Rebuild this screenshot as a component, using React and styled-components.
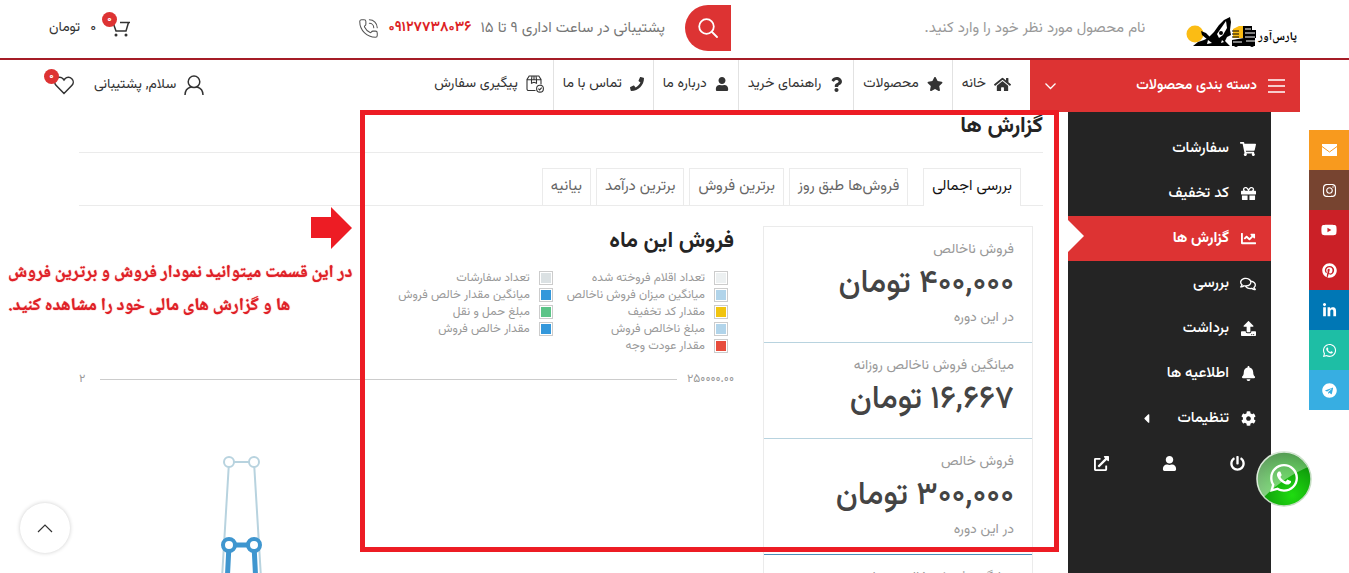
import React from 'react'
import styled, { createGlobalStyle } from 'styled-components'
import {
  FaHome, FaStar, FaQuestion, FaUser, FaPhone, FaShoppingCart, FaGift, FaChartLine, FaRegComments,
  FaUpload, FaBell, FaCog, FaPowerOff, FaExternalLinkAlt, FaCaretLeft, FaInstagram, FaYoutube,
  FaPinterest, FaLinkedinIn, FaWhatsapp, FaTelegram,
} from 'react-icons/fa'
import { PhoneCall } from 'lucide-react'

const GlobalStyle = createGlobalStyle`
  * {
    box-sizing: border-box;
  }
  body {
    margin: 0;
    background: #fff;
    color: #333;
    font-family: Vazirmatn, "Noto Sans Arabic", "DejaVu Sans", sans-serif;
    font-size: 14px;
  }
  a {
    color: inherit;
    text-decoration: none;
  }
  h1, h2, p, ul {
    margin: 0;
    padding: 0;
  }
  ul {
    list-style: none;
  }
  button {
    border: none;
    padding: 0;
    cursor: pointer;
    font-family: inherit;
  }
  svg {
    display: block;
    flex-shrink: 0;
  }
`

const Page = styled.div`
  height: 100vh;
  overflow: hidden;
  direction: rtl;
  display: flex;
  flex-direction: column;
`

// header

const TopBar = styled.header`
  display: flex;
  align-items: center;
  height: 60px;
  flex-shrink: 0;
  padding: 0 49px 2px;
  border-bottom: 2px solid #a51c26;
`
const Logo = styled.a`
  display: flex;
  align-items: flex-end;
  margin: 8px 3px 0 26px;
`
const LogoText = styled.span`
  font-family: "Noto Naskh Arabic", serif;
  font-size: 12px;
  font-weight: 700;
  line-height: 20px;
  color: #000;
  white-space: nowrap;
`
const Search = styled.form`
  display: flex;
  width: 38%;
  height: 46px;
`
const SearchInput = styled.input`
  flex: 1;
  min-width: 0;
  border: none;
  outline: none;
  padding: 0 15px;
  font-family: inherit;
  font-size: 15px;
  color: #333;
  &::placeholder {
    color: #999;
    opacity: 1;
  }
`
const SearchButton = styled.button`
  width: 46px;
  display: flex;
  align-items: center;
  justify-content: center;
  color: #fff;
  background-color: #dd3333;
  border-radius: 23px 0 0 23px;
`
const Support = styled.div`
  display: flex;
  align-items: center;
  gap: 9px;
  margin-right: 20px;
  font-size: 15px;
  color: #777;
  white-space: nowrap;
`
const SupportPhone = styled.a`
  color: #dd1f26;
  font-size: 14px;
  font-weight: 700;
`
const Cart = styled.a`
  display: flex;
  align-items: center;
  gap: 16px;
  margin-right: auto;
`
const Price = styled.span`
  display: flex;
  gap: 10px;
`
const IconWithBadge = styled.span`
  position: relative;
`
const Badge = styled.span`
  position: absolute;
  top: -7px;
  left: -10px;
  width: 15px;
  height: 15px;
  border-radius: 50%;
  background-color: #dd3333;
  color: #fff;
  font-size: 10px;
  font-weight: 700;
  line-height: 15px;
  text-align: center;
`

// navigation

const NavBar = styled.div`
  display: flex;
  height: 52px;
  flex-shrink: 0;
  padding: 0 49px;
`
const Categories = styled.button`
  width: 270px;
  display: flex;
  align-items: center;
  gap: 11px;
  padding: 0 15px;
  color: #fff;
  background-color: #dd3333;
  font-size: 14px;
  font-weight: 600;
`
const CategoriesArrow = styled.span`
  margin-right: auto;
`
const Menu = styled.nav`
  display: flex;
  padding-right: 10px;
`
const MenuLink = styled.a`
  display: flex;
  align-items: center;
  gap: 8px;
  padding: 0 9px 4px;
  white-space: nowrap;
  border-left: 1px solid #e2e2e2;
  &:last-child {
    border-left: none;
  }
`
const Account = styled.div`
  display: flex;
  align-items: center;
  gap: 20px;
  margin-right: auto;
  padding: 0 0 2px 5px;
  white-space: nowrap;
`
const AccountLink = styled.a`
  display: flex;
  align-items: center;
  gap: 8px;
`

// main area

const Main = styled.main`
  position: relative;
  display: flex;
  flex: 1;
  min-height: 0;
  padding: 0 78px 0 79px;
`
const Sidebar = styled.aside`
  width: 203px;
  flex-shrink: 0;
  padding-top: 14px;
  background-color: #242424;
  color: #fff;
`
const SideLink = styled.a`
  position: relative;
  display: flex;
  align-items: center;
  gap: 11px;
  height: 45px;
  padding: 0 15px;
  font-size: 15px;
  font-weight: ${props => (props.$active ? 700 : 500)};
  background-color: ${props => (props.$active ? '#dd3333' : 'transparent')};
  &::after {
    content: "";
    display: ${props => (props.$active ? 'block' : 'none')};
    position: absolute;
    left: 0;
    top: 4px;
    border: 16px solid transparent;
    border-left-color: #fff;
    border-right-width: 0;
  }
`
const SideIcon = styled.span`
  width: 16px;
  display: flex;
  justify-content: center;
`
const SideCaret = styled.span`
  margin-right: 12px;
`
const SideFooter = styled.div`
  display: flex;
  height: 45px;
`
const SideFooterLink = styled.a`
  flex: 1;
  display: flex;
  align-items: center;
  justify-content: center;
`
const Content = styled.section`
  flex: 1;
  min-width: 0;
  margin-right: 25px;
`
const PageTitle = styled.h1`
  font-size: 22px;
  line-height: 30px;
  font-weight: 700;
  color: #242424;
  padding-bottom: 10px;
  border-bottom: 1px solid #ebebeb;
`
const Tabs = styled.nav`
  display: flex;
  gap: 5px;
  margin-top: 15px;
  padding-right: 22px;
  border-bottom: 1px solid #ebebeb;
`
const Tab = styled.a`
  height: 37px;
  line-height: 35px;
  padding: 0 8px;
  border: 1px solid #ebebeb;
  border-bottom: none;
  font-size: 15px;
  color: ${props => (props.$active ? '#111' : '#666')};
  background-color: #fff;
  height: ${props => (props.$active ? '38px' : '37px')};
  margin-bottom: ${props => (props.$active ? '-1px' : 0)};
  margin-left: ${props => (props.$active ? '10px' : 0)};
  white-space: nowrap;
`
const Report = styled.div`
  display: flex;
  gap: 29px;
  padding: 20px 10px 0 0;
`
const Summary = styled.ul`
  width: 270px;
  flex-shrink: 0;
  border: 1px solid #ebebeb;
`
const SummaryItem = styled.li`
  min-height: 96px;
  padding: 12px 18px 13px;
  border-bottom: 1px solid ${props => props.$line};
`
const SummaryLabel = styled.p`
  font-size: 14px;
  line-height: 22px;
  color: #999;
`
const SummaryValue = styled.p`
  font-size: 32px;
  line-height: 46px;
  font-weight: 500;
  color: #444;
`
const Chart = styled.div`
  flex: 1;
  min-width: 0;
`
const ChartTitle = styled.h2`
  font-size: 22px;
  line-height: 32px;
  font-weight: 700;
  color: #242424;
`
const Legend = styled.ul`
  display: grid;
  grid-auto-flow: column;
  grid-template-rows: repeat(5, 14px);
  grid-auto-columns: 27%;
  row-gap: 3px;
  margin-top: 13px;
  padding-right: 6px;
`
const LegendItem = styled.li`
  display: flex;
  align-items: center;
  gap: 9px;
  font-size: 12px;
  line-height: 14px;
  color: #999;
  white-space: nowrap;
`
const Swatch = styled.span`
  width: 14px;
  height: 14px;
  flex-shrink: 0;
  border: 1px solid #ccc;
  padding: 1px;
  background-color: ${props => props.$color};
  background-clip: content-box;
`
const Axis = styled.div`
  display: flex;
  align-items: center;
  margin-top: 18px;
  font-size: 12px;
  line-height: 16px;
  color: #999;
`
const AxisLine = styled.span`
  flex: 1;
  height: 1px;
  margin: 0 10px 0 15px;
  background-color: #ccc;
`

// notes over the page

const Frame = styled.div`
  position: absolute;
  top: -2px;
  left: 360px;
  right: 290px;
  height: 442px;
  border: 5px solid #ed1c24;
  pointer-events: none;
`
const Note = styled.div`
  position: absolute;
  top: 95px;
  left: 8px;
`
const NoteArrow = styled.svg`
  margin-left: 303px;
`
const NoteText = styled.p`
  margin-top: 8px;
  font-family: "Noto Naskh Arabic", serif;
  font-size: 18px;
  line-height: 33px;
  font-weight: 700;
  color: #e01f27;
  text-shadow: 0 0 1px #e01f27;
  text-align: left;
  white-space: nowrap;
`
const Social = styled.div`
  position: fixed;
  top: 130px;
  right: 0;
`
const SocialLink = styled.a`
  width: 40px;
  height: 40px;
  display: flex;
  align-items: center;
  justify-content: center;
  color: #fff;
  background-color: ${props => props.$color};
`
const ChatButton = styled.a`
  position: fixed;
  right: 37px;
  bottom: 66px;
  width: 56px;
  height: 56px;
`
const ScrollTop = styled.button`
  position: fixed;
  left: 20px;
  bottom: 20px;
  width: 50px;
  height: 50px;
  display: flex;
  align-items: center;
  justify-content: center;
  border-radius: 50%;
  background-color: #fff;
  box-shadow: 0 0 4px rgba(0, 0, 0, 0.2);
`

const LogoArt = () => (
  <svg width="72" height="32" viewBox="0 0 72 32">
    <circle cx="9" cy="18" r="8.5" fill="#fbbc14" />
    <path d="M7 30 12 26 18 24 22 22 24 20 28 16 33 9 38 4 44 1 45 6 44 14 45 19 41 21 39 25 44 30Z" fill="#000" />
    <path d="M15 15 20 17 26 23 32 27 30 29 22 24 16 19Z" fill="#000" />
    <path d="M31 18 40 5 41 12 37 19 33 22Z" fill="#fff" />
    <circle cx="35" cy="17" r="2" fill="#000" />
    <path d="M22 24l4 3-5 1zM36 24l2 2-3 1z" fill="#fff" />
    <path d="M47 13 53 10 57 10 57 22 47 22Z" fill="#fbbc14" />
    <path d="M46 15H53M46 18H53M46 21H53" stroke="#000" strokeWidth="1" />
    <path d="M46 24 58 22V20H69V30H46Z" fill="#000" />
    <path d="M57 10H66V14H70V22H57Z" fill="#000" />
    <path d="M59 13H65M59 17H69M59 21H69M60 25H70M47 26H56" stroke="#fff" strokeWidth="1" />
    <circle cx="50" cy="29" r="2" fill="#000" />
    <circle cx="66" cy="29" r="2" fill="#000" />
  </svg>
)

const SearchIcon = () => (
  <svg width="20" height="20" viewBox="0 0 20 20" fill="none" stroke="currentColor" strokeWidth="1.8" strokeLinecap="round">
    <circle cx="8.5" cy="8.5" r="7.3" />
    <path d="M14 14l5 5" />
  </svg>
)

const CartIcon = () => (
  <svg width="18" height="18" viewBox="0 0 18 18" fill="none" stroke="#333" strokeWidth="1.5">
    <path d="M8 3.500H18M16.500 3.500L14 12H4L1.500 5" />
    <circle cx="4" cy="16" r="1.5" fill="#333" stroke="none" />
    <circle cx="14" cy="16" r="1.5" fill="#333" stroke="none" />
  </svg>
)

const HeartIcon = () => (
  <svg width="20" height="19" viewBox="0 0 20 19" fill="none" stroke="#333" strokeWidth="1.5">
    <path d="M10 17.500 2 9.300C0.300 7.500 0.400 4.500 2.200 2.700 4.200 0.800 7.200 0.900 9 2.800L10 4 11 2.800C12.800 0.900 15.800 0.800 17.800 2.700 19.600 4.500 19.700 7.500 18 9.300Z" />
  </svg>
)

const PersonIcon = () => (
  <svg width="20" height="20" viewBox="0 0 20 20" fill="none" stroke="#333" strokeWidth="1.5">
    <circle cx="10" cy="6.800" r="5.800" />
    <path d="M1 20C1 15.500 3.500 13 7 12M19 20C19 15.500 16.500 13 13 12" />
  </svg>
)

const ParcelIcon = () => (
  <svg width="18" height="18" viewBox="0 0 18 18" fill="none" stroke="#333" strokeWidth="1.1">
    <path d="M9.500 15.500H2.500A1.500 1.500 0 0 1 1 14V4.500L3.200 1H12.800L15 4.500V9.500M1 4.800H15M6 1L5.500 4.800V8.300L8 7.300 10.500 8.300V4.800L10 1M8 1V4.800" />
    <circle cx="14" cy="13.700" r="3.400" />
    <path d="M12.400 13.700L13.600 14.900 15.700 12.600" />
  </svg>
)

const MenuIcon = () => (
  <svg width="17" height="14" viewBox="0 0 17 14" stroke="#fff" strokeWidth="1.5">
    <path d="M0 1H17M0 7H17M0 13H17" />
  </svg>
)

const MailIcon = () => (
  <svg width="15" height="12" viewBox="0 0 15 12">
    <path d="M0 0H15V12H0Z" fill="#fff" />
    <path d="M0 2.500 7.500 8 15 2.500" fill="none" stroke="#f89a1e" strokeWidth="1" />
  </svg>
)

const ChatArt = () => (
  <svg width="56" height="56" viewBox="0 0 56 56">
    <defs>
      <radialGradient id="chatFill" cx="0.65" cy="0.8" r="0.8">
        <stop offset="0" stopColor="#1fdc10" />
        <stop offset="0.6" stopColor="#12a50c" />
        <stop offset="1" stopColor="#087006" />
      </radialGradient>
      <linearGradient id="chatGloss" x1="0" y1="1" x2="0.6" y2="0">
        <stop offset="0" stopColor="#fff" stopOpacity="0.5" />
        <stop offset="1" stopColor="#fff" stopOpacity="0.3" />
      </linearGradient>
    </defs>
    <circle cx="28" cy="28" r="27" fill="url(#chatFill)" stroke="#c4dcc2" strokeWidth="1.5" />
    <path d="M8 46A27 27 0 1 1 52 16C38 22 22 32 8 46Z" fill="url(#chatGloss)" />
    <FaWhatsapp x="12" y="11" size={32} color="#fff" />
  </svg>
)

const menu = [
  { text: 'خانه', icon: <FaHome size={17} /> },
  { text: 'محصولات', icon: <FaStar size={16} /> },
  { text: 'راهنمای خرید', icon: <FaQuestion size={15} /> },
  { text: 'درباره ما', icon: <FaUser size={14} /> },
  { text: 'تماس با ما', icon: <FaPhone size={14} /> },
  { text: 'پیگیری سفارش', icon: <ParcelIcon /> },
]

const sideLinks = [
  { text: 'سفارشات', icon: <FaShoppingCart size={16} /> },
  { text: 'کد تخفیف', icon: <FaGift size={15} /> },
  { text: 'گزارش ها', icon: <FaChartLine size={15} />, active: true },
  { text: 'بررسی', icon: <FaRegComments size={16} /> },
  { text: 'برداشت', icon: <FaUpload size={15} /> },
  { text: 'اطلاعیه ها', icon: <FaBell size={15} /> },
  { text: 'تنظیمات', icon: <FaCog size={15} />, sub: true },
]

const tabs = ['بررسی اجمالی', 'فروش‌ها طبق روز', 'برترین فروش', 'برترین درآمد', 'بیانیه']

const summary = [
  { label: 'فروش ناخالص', value: '۴۰۰,۰۰۰ تومان', note: 'در این دوره', line: '#b8d3df' },
  { label: 'میانگین فروش ناخالص روزانه', value: '۱۶,۶۶۷ تومان', line: '#b8d3df' },
  { label: 'فروش خالص', value: '۳۰۰,۰۰۰ تومان', note: 'در این دوره', line: '#4a8fb8' },
  { label: 'میانگین فروش خالص روزانه', value: '۱۲,۵۰۰ تومان', line: '#4a8fb8' },
]

const legend = [
  { text: 'تعداد اقلام فروخته شده', color: '#ecf0f1' },
  { text: 'میانگین میزان فروش ناخالص', color: '#b1d4ea' },
  { text: 'مقدار کد تخفیف', color: '#f1c40f' },
  { text: 'مبلغ ناخالص فروش', color: '#b1d4ea' },
  { text: 'مقدار عودت وجه', color: '#e74c3c' },
  { text: 'تعداد سفارشات', color: '#dbe1e3' },
  { text: 'میانگین مقدار خالص فروش', color: '#3498db' },
  { text: 'مبلغ حمل و نقل', color: '#5cc488' },
  { text: 'مقدار خالص فروش', color: '#3498db' },
]

const social = [
  { name: 'Email', color: '#f89a1e', icon: <MailIcon /> },
  { name: 'Instagram', color: '#774430', icon: <FaInstagram size={15} /> },
  { name: 'YouTube', color: '#cb2027', icon: <FaYoutube size={16} /> },
  { name: 'Pinterest', color: '#cb2027', icon: <FaPinterest size={15} /> },
  { name: 'LinkedIn', color: '#0077b5', icon: <FaLinkedinIn size={15} /> },
  { name: 'WhatsApp', color: '#1ebea5', icon: <FaWhatsapp size={15} /> },
  { name: 'Telegram', color: '#37aee2', icon: <FaTelegram size={15} /> },
]

const Header = () => (
  <>
    <TopBar>
      <Logo href="#">
        <LogoText>پارس‌آور</LogoText>
        <LogoArt />
      </Logo>
      <Search onSubmit={e => e.preventDefault()}>
        <SearchInput type="text" aria-label="جستجو" placeholder="نام محصول مورد نظر خود را وارد کنید." />
        <SearchButton type="submit" aria-label="جستجو"><SearchIcon /></SearchButton>
      </Search>
      <Support>
        <span>پشتیبانی در ساعت اداری ۹ تا ۱۵</span>
        <SupportPhone href="tel:09127738036">۰۹۱۲۷۷۳۸۰۳۶</SupportPhone>
        <PhoneCall size={21} strokeWidth={1.2} color="#555" />
      </Support>
      <Cart href="#">
        <IconWithBadge>
          <CartIcon />
          <Badge>۰</Badge>
        </IconWithBadge>
        <Price><span>۰</span><span>تومان</span></Price>
      </Cart>
    </TopBar>
    <NavBar>
      <Categories type="button">
        <MenuIcon />
        دسته بندی محصولات
        <CategoriesArrow>
          <svg width="11" height="7" viewBox="0 0 11 7" fill="none" stroke="#fff" strokeWidth="1.3"><path d="M0.500 0.500L5.500 5.500 10.500 0.500" /></svg>
        </CategoriesArrow>
      </Categories>
      <Menu>
        {menu.map(item => (
          <MenuLink href="#" key={item.text}>{item.icon}{item.text}</MenuLink>
        ))}
      </Menu>
      <Account>
        <AccountLink href="#"><PersonIcon />سلام, پشتیبانی</AccountLink>
        <AccountLink href="#" aria-label="علاقه مندی">
          <IconWithBadge>
            <HeartIcon />
            <Badge>۰</Badge>
          </IconWithBadge>
        </AccountLink>
      </Account>
    </NavBar>
  </>
)

const SalesChart = () => (
  <svg width="100%" height="190" direction="ltr">
    <g fill="none" stroke="#b8d3df" strokeWidth="2">
      <path d="M136 307L150 75H175L189 307" />
      <circle cx="150" cy="75" r="5" fill="#fff" />
      <circle cx="175" cy="75" r="5" fill="#fff" />
    </g>
    <g fill="none" stroke="#3f96cf" strokeWidth="5">
      <path d="M138 397L150 158H175L187 397" />
      <circle cx="150" cy="158" r="6" fill="#fff" strokeWidth="4" />
      <circle cx="175" cy="158" r="6" fill="#fff" strokeWidth="4" />
    </g>
  </svg>
)

const App = () => {
  return (
    <Page>
      <GlobalStyle />
      <Header />
      <Main>
        <Sidebar>
          {sideLinks.map(item => (
            <SideLink href="#" key={item.text} $active={item.active}>
              <SideIcon>{item.icon}</SideIcon>
              {item.text}
              {item.sub && <SideCaret><FaCaretLeft size={15} /></SideCaret>}
            </SideLink>
          ))}
          <SideFooter>
            <SideFooterLink href="#" aria-label="خروج"><FaPowerOff size={15} /></SideFooterLink>
            <SideFooterLink href="#" aria-label="پروفایل"><FaUser size={15} /></SideFooterLink>
            <SideFooterLink href="#" aria-label="فروشگاه"><FaExternalLinkAlt size={15} /></SideFooterLink>
          </SideFooter>
        </Sidebar>
        <Content>
          <PageTitle>گزارش ها</PageTitle>
          <Tabs>
            {tabs.map((tab, i) => <Tab href="#" key={tab} $active={i === 0}>{tab}</Tab>)}
          </Tabs>
          <Report>
            <Summary>
              {summary.map(item => (
                <SummaryItem key={item.label} $line={item.line}>
                  <SummaryLabel>{item.label}</SummaryLabel>
                  <SummaryValue>{item.value}</SummaryValue>
                  {item.note && <SummaryLabel>{item.note}</SummaryLabel>}
                </SummaryItem>
              ))}
            </Summary>
            <Chart>
              <ChartTitle>فروش این ماه</ChartTitle>
              <Legend>
                {legend.map(item => (
                  <LegendItem key={item.text}><Swatch $color={item.color} />{item.text}</LegendItem>
                ))}
              </Legend>
              <Axis>
                <span>۲۵۰۰۰۰.۰۰</span>
                <AxisLine />
                <span>۲</span>
              </Axis>
              <SalesChart />
            </Chart>
          </Report>
        </Content>
        <Frame />
        <Note>
          <NoteArrow width="41" height="42" viewBox="0 0 41 42"><path d="M0 10H20V0L41 21 20 42V31H0Z" fill="#ed1c24" /></NoteArrow>
          <NoteText>
            در این قسمت میتوانید نمودار فروش و برترین فروش<br />
            ها و گزارش های مالی خود را مشاهده کنید.
          </NoteText>
        </Note>
      </Main>
      <Social>
        {social.map(item => (
          <SocialLink href="#" key={item.name} aria-label={item.name} $color={item.color}>{item.icon}</SocialLink>
        ))}
      </Social>
      <ChatButton href="#" aria-label="WhatsApp"><ChatArt /></ChatButton>
      <ScrollTop type="button" aria-label="بالا">
        <svg width="16" height="9" viewBox="0 0 16 9" fill="none" stroke="#333" strokeWidth="1.2"><path d="M1 8L8 1 15 8" /></svg>
      </ScrollTop>
    </Page>
  )
}

export default App
